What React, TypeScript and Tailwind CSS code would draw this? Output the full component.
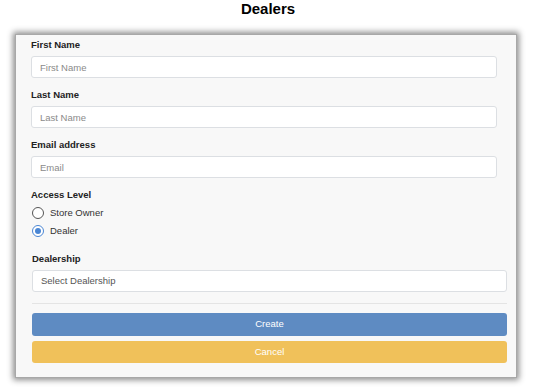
import { useState } from 'react';

const labelCls = 'block text-[9.5px] leading-[12px] font-bold text-[#222] mb-[5px]';
const inputCls =
  'block w-full h-[22px] px-[8px] bg-white border border-[#dcdfe3] rounded-[3px] text-[9.5px] text-[#333] placeholder:text-[#8a8a8a] outline-none';

export default function App() {
  const [level, setLevel] = useState<'owner' | 'dealer'>('dealer');

  return (
    <div className="w-[536px] h-[391px] bg-white font-['Liberation_Sans',Arial,sans-serif] overflow-hidden">
      <h1 className="text-center text-[15px] leading-[16px] font-bold text-black pt-[1px]">Dealers</h1>

      <div className="mx-[15px] mt-[17px] w-[502px] bg-[#f8f8f8] border border-[#a8a8a8] shadow-[0_0_6px_2px_rgba(0,0,0,0.45)] pt-[4px] pb-[14px] pl-[15px] pr-[9px]">
        <div className="mr-[10px] mb-[11px]">
          <label className={labelCls}>First Name</label>
          <input className={inputCls} placeholder="First Name" />
        </div>
        <div className="mr-[10px] mb-[11px]">
          <label className={labelCls}>Last Name</label>
          <input className={inputCls} placeholder="Last Name" />
        </div>
        <div className="mr-[10px] mb-[11px]">
          <label className={labelCls}>Email address</label>
          <input className={inputCls} placeholder="Email" />
        </div>

        <div className="mb-[12px]">
          <p className="text-[9.5px] leading-[12px] font-bold text-[#222] mb-[3px]">Access Level</p>
          {[
            { key: 'owner' as const, text: 'Store Owner' },
            { key: 'dealer' as const, text: 'Dealer' },
          ].map((opt) => (
            <button
              key={opt.key}
              onClick={() => setLevel(opt.key)}
              className="flex items-center h-[18px] gap-[6px] ml-[1px]"
            >
              {level === opt.key ? (
                <span className="w-[12px] h-[12px] rounded-full border-[1.5px] border-[#4a86d4] bg-white flex items-center justify-center">
                  <span className="w-[6px] h-[6px] rounded-full bg-[#4a86d4]" />
                </span>
              ) : (
                <span className="w-[12px] h-[12px] rounded-full border-[1.5px] border-[#555] bg-white" />
              )}
              <span className="text-[9.5px] text-[#333]">{opt.text}</span>
            </button>
          ))}
        </div>

        <div className="ml-[1px] pt-[1px]">
          <label className={labelCls}>Dealership</label>
          <div className="h-[22px] px-[8px] flex items-center bg-white border border-[#dcdfe3] rounded-[3px] text-[9.5px] text-[#555]">
            Select Dealership
          </div>
        </div>

        <hr className="ml-[1px] mt-[11px] mb-[9px] border-0 border-t border-[#e4e4e4]" />

        <div className="ml-[1px] flex flex-col gap-[5px]">
          <button className="h-[23px] w-full rounded-[3px] bg-[#5e8bc2] text-white text-[9.5px]">Create</button>
          <button className="h-[22px] w-full rounded-[3px] bg-[#f0c15a] text-white text-[9.5px]">Cancel</button>
        </div>
      </div>
    </div>
  );
}
